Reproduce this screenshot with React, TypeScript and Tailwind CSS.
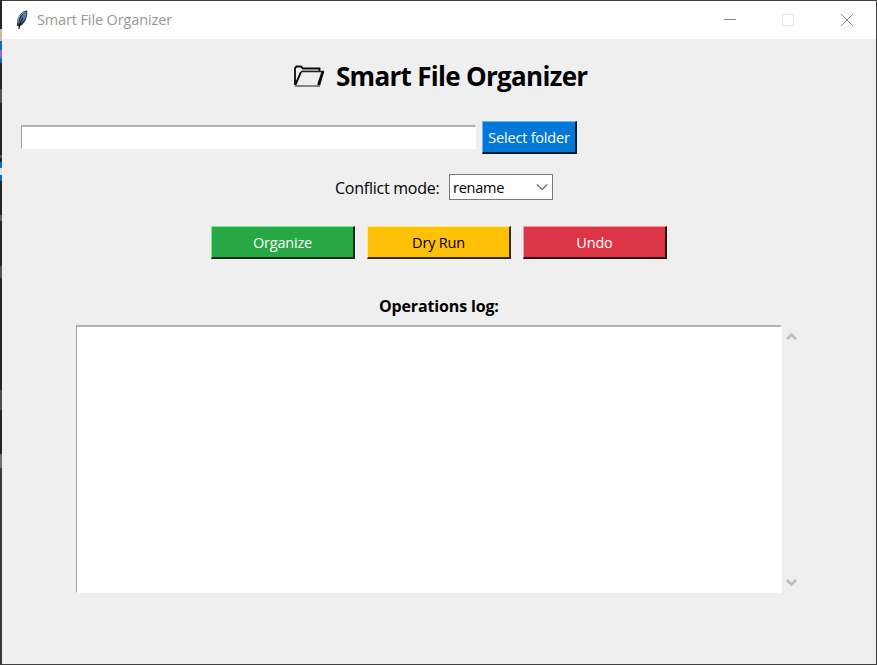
import type { ReactNode } from "react";

const edge = [
  ["h-[29px]", "bg-[#252525]"],
  ["h-[12px]", "bg-[#c9b9a5]"],
  ["h-[9px]", "bg-[#0a6fc2]"],
  ["h-[8px]", "bg-[#9a68bd]"],
  ["h-[5px]", "bg-[#0a6fc2]"],
  ["h-[26px]", "bg-[#252525]"],
  ["h-[14px]", "bg-[#505459]"],
  ["h-[52px]", "bg-[#252525]"],
  ["h-[3px]", "bg-[#7a4e2c]"],
  ["h-[4px]", "bg-[#252525]"],
  ["h-[6px]", "bg-[#0a6fc2]"],
  ["h-[7px]", "bg-[#d4e4f0]"],
  ["h-[6px]", "bg-[#0a6fc2]"],
  ["h-[34px]", "bg-[#252525]"],
  ["h-[6px]", "bg-[#5c6064]"],
  ["h-[45px]", "bg-[#252525]"],
  ["h-[12px]", "bg-[#505050]"],
  ["h-[112px]", "bg-[#252525]"],
  ["h-[20px]", "bg-[#4c4c4c]"],
  ["h-[44px]", "bg-[#252525]"],
  ["h-[14px]", "bg-[#707070]"],
  ["h-[197px]", "bg-[#3a3a3a]"],
];

function Feather() {
  return (
    <svg width="14" height="20" viewBox="0 0 14 20" className="shrink-0">
      <path d="M11.200 .5C7.500 1.500 4 4.500 2.400 9L1.800 15.500 4 16.700C9.500 14.500 12.800 8 12.300 .8Z" fill="#30363e" />
      <path d="M11 1.500C7 4.500 4.600 9 4.200 14.200 9.200 11.500 11.600 7 11.600 1.800Z" fill="#4a83c6" />
      <path d="M9.500 2.300C6.400 3.800 3.800 6.500 3 10L2.900 13" fill="none" stroke="#a1b5c9" strokeWidth="1" />
      <path d="M7.800 7.500C6.600 10 4.800 13.500 3.800 19" fill="none" stroke="#15191f" strokeWidth="1.200" />
    </svg>
  );
}

function FolderIcon() {
  return (
    <svg width="32" height="24" viewBox="0 0 32 24" className="shrink-0">
      <path d="M2 21V4L3.500 2.500H8L10 4.500H26.500V7" fill="none" stroke="#080808" strokeWidth="1.800" />
      <path d="M2.500 21.500 8.500 7.500H30.500L26.500 21.500" fill="none" stroke="#222" strokeWidth="1.300" />
      <path d="M2.500 21 7.600 8 5.800 12 2.500 19Z" fill="#080808" stroke="#080808" />
      <path d="M29.800 7.500 25.300 21" stroke="#080808" strokeWidth="2.400" />
      <path d="M2 22H27" stroke="#777" strokeWidth="1.800" />
      <path d="M9 6.300H25" stroke="#999" />
    </svg>
  );
}

function Button({ className, children }: { className: string; children: ReactNode }) {
  return (
    <button className={`flex shrink-0 items-center justify-center border-t border-l border-r-2 border-b-2 pt-[2px] whitespace-nowrap ${className}`}>
      {children}
    </button>
  );
}

export default function App() {
  return (
    <div className="flex h-[665px] w-[877px] overflow-hidden bg-[#404043] font-['Open_Sans','Noto_Sans',sans-serif] text-black">
      <div className="flex w-[2px] shrink-0 flex-col">
        {edge.map(([h, c], i) => <div key={i} className={`shrink-0 ${h} ${c}`} />)}
      </div>
      <div className="mt-px flex h-[663px] w-[874px] shrink-0 flex-col bg-[#efefef]">
        <header className="flex h-[38px] shrink-0 items-center bg-white pl-[13px] pr-[22px]">
          <Feather />
          <span className="ml-[8px] text-[14.500px] tracking-[-0.13px] whitespace-nowrap text-[#999]">Smart File Organizer</span>
          <svg width="132" height="14" viewBox="0 0 132 14" className="ml-auto" fill="none" shapeRendering="crispEdges">
            <path d="M2 6.500H14" stroke="#888" />
            <path d="M60.500 1.500H71.500V12.500H60.500Z" stroke="#e8e8e8" />
            <path d="M119 1 131 13M131 1 119 13" stroke="#888" shapeRendering="auto" />
          </svg>
        </header>
        <main className="flex flex-col">
          <h1 className="flex h-[82px] items-center pl-[291px] pb-[8px]">
            <FolderIcon />
            <span className="ml-[11px] text-[26px] font-bold tracking-[-0.7px] whitespace-nowrap">Smart File Organizer</span>
          </h1>
          <div className="flex h-[33px] items-start pl-[19px]">
            <input aria-label="Folder" className="mt-[4px] h-[24px] w-[455px] border-t-2 border-l border-r border-b border-t-[#b0b0b0] border-l-[#a0a0a0] border-r-white border-b-white bg-white" />
            <Button className="ml-[6px] h-[33px] w-[95px] border-t-[#6cb8ff] border-l-[#6cb8ff] border-r-[#061b2c] border-b-[#061b2c] bg-[#0078d7] text-[14.500px] tracking-[-0.2px] text-white">Select folder</Button>
          </div>
          <div className="mt-[20px] flex h-[26px] items-center pl-[333px]">
            <span className="w-[114px] pt-[1px] text-[16px] tracking-[-0.25px] whitespace-nowrap">Conflict mode:</span>
            <div className="flex h-[26px] w-[104px] items-center justify-between border border-[#7a7a7a] bg-white pl-[3px] pr-[4px]">
              <span className="pt-[2px] text-[14.500px] tracking-[-0.25px]">rename</span>
              <svg width="12" height="8" viewBox="0 0 12 8"><path d="M1 1.500 6 6.500 11 1.500" fill="none" stroke="#777" strokeWidth="1.500" /></svg>
            </div>
          </div>
          <div className="mt-[26px] flex gap-[12px] pl-[209px] text-[14.500px] tracking-[-0.2px]">
            <Button className="h-[33px] w-[144px] border-t-[#7ce799] border-l-[#7ce799] border-r-[#12301a] border-b-[#12301a] bg-[#28a745] text-white">Organize</Button>
            <Button className="h-[33px] w-[144px] border-t-[#ffed78] border-l-[#ffed78] border-r-[#342807] border-b-[#342807] bg-[#ffc107]">Dry Run</Button>
            <Button className="h-[33px] w-[144px] border-t-[#ff9aa5] border-l-[#ff9aa5] border-r-[#301115] border-b-[#301115] bg-[#dc3545] text-white">Undo</Button>
          </div>
          <h2 className="mt-[34px] flex h-[25px] items-center pl-[377px] text-[16px] font-bold tracking-[-0.15px] whitespace-nowrap">Operations log:</h2>
          <div className="mt-[7px] flex h-[268px] pl-[74px]">
            <textarea aria-label="Operations log" className="h-[268px] w-[706px] resize-none border-t-2 border-l border-r-2 border-b border-t-[#b0b0b0] border-l-[#a0a0a0] border-r-white border-b-white bg-white" />
            <div className="flex w-[19px] flex-col items-center justify-between pt-[7px] pb-[6px]">
              <svg width="11" height="9" viewBox="0 0 11 9"><path d="M1 7 5.500 2.500 10 7" fill="none" stroke="#bdbdbd" strokeWidth="2.500" /></svg>
              <svg width="11" height="9" viewBox="0 0 11 9"><path d="M1 2 5.500 6.500 10 2" fill="none" stroke="#bdbdbd" strokeWidth="2.500" /></svg>
            </div>
          </div>
        </main>
      </div>
    </div>
  );
}
